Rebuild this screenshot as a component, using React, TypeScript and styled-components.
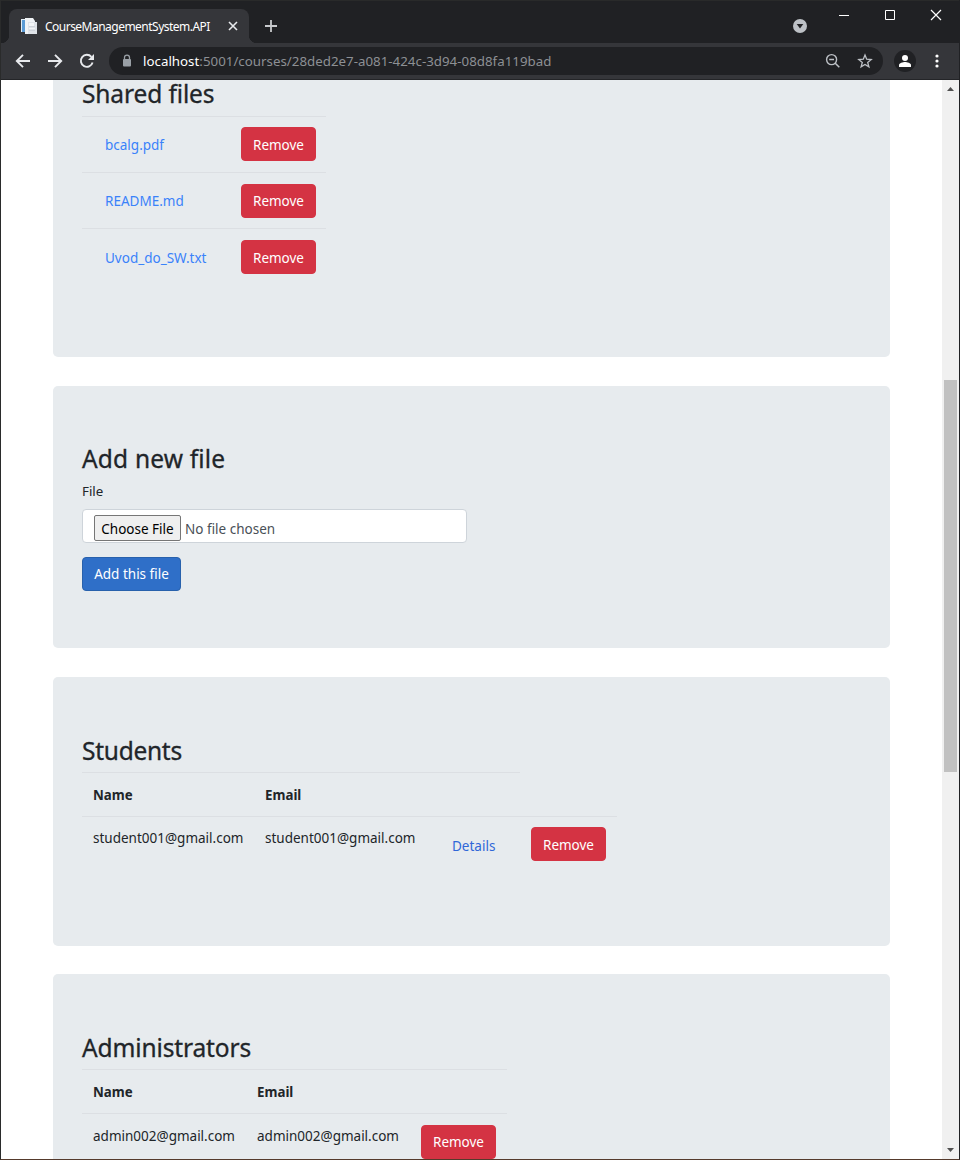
import React from "react";
import styled, { createGlobalStyle } from "styled-components";

const Global = createGlobalStyle`
  * { box-sizing: border-box; }
  html, body { margin: 0; padding: 0; overflow: hidden; }
  body {
    font-family: "Noto Sans", "Open Sans", sans-serif;
    font-size: 13.5px;
    color: #212529;
    background: #202124;
  }
`;

const Window = styled.div`
  display: flex;
  flex-direction: column;
  width: 960px;
  height: 1160px;
  background: #202124;
  border-left: 1px solid #2a2b2b;
  border-right: 1px solid #202124;
  border-bottom: 1px solid #553a2c;
  overflow: hidden;
`;

const TabStrip = styled.header`
  display: flex;
  height: 43px;
  flex: none;
  padding-left: 8px;
  border-top: 1px solid #292a2a;
`;

const Tab = styled.div`
  display: flex;
  align-items: center;
  position: relative;
  width: 240px;
  height: 34px;
  margin-top: 8px;
  padding: 0 10px 0 12px;
  border-radius: 8px 8px 0 0;
  background: #35363a;
  color: #fff;

  &::before, &::after {
    content: "";
    position: absolute;
    bottom: 0;
    width: 8px;
    height: 8px;
  }
  &::before { left: -8px; background: radial-gradient(circle at 0 0, transparent 8px, #35363a 8.5px); }
  &::after { right: -8px; background: radial-gradient(circle at 100% 0, transparent 8px, #35363a 8.5px); }
`;

const TabTitle = styled.span`
  flex: 1;
  margin-left: 8px;
  font-size: 12px;
  letter-spacing: -0.52px;
  white-space: nowrap;
`;

const NewTab = styled.div`
  display: flex;
  margin: 18px 0 0 15px;
`;

const WindowControls = styled.div`
  display: flex;
  align-items: flex-start;
  margin-left: auto;
  padding: 8px 17px 0 0;
  gap: 34px;
  svg { display: block; }
`;

const TabSearch = styled.div`
  margin: 10px -3px 0 0;
`;

const Toolbar = styled.div`
  display: flex;
  align-items: center;
  height: 37px;
  flex: none;
  padding: 0 14px 1px 14px;
  background: #35363a;
  border-bottom: 1px solid #242528;
  svg { display: block; flex: none; }
`;

const NavButtons = styled.div`
  display: flex;
  gap: 16px;
  width: 94px;
`;

const AddressBar = styled.div`
  display: flex;
  align-items: center;
  width: 774px;
  height: 28px;
  padding: 0 10px 0 12px;
  border-radius: 14px;
  background: #202124;
`;

const Url = styled.span`
  flex: 1;
  margin-left: 10px;
  font-size: 13.3px;
  letter-spacing: 0.015px;
  white-space: nowrap;
  color: #8d9094;
  b { font-weight: 400; color: #fff; }
`;

const Actions = styled.div`
  display: flex;
  align-items: center;
  gap: 16px;
`;

const Avatar = styled.div`
  display: flex;
  align-items: center;
  justify-content: center;
  width: 22px;
  height: 22px;
  margin-left: 11px;
  border-radius: 50%;
  background: #202124;
`;

const MenuDots = styled.div`
  margin-left: auto;
  margin-right: 6px;
`;

const Viewport = styled.div`
  display: flex;
  flex: 1;
  min-height: 0;
  background: #fff;
`;

const Page = styled.main`
  display: flex;
  flex-direction: column;
  flex: 1;
  padding: 0 52px;
`;

const Card = styled.section<{ $height: number; $gap?: number; $top?: number; $continued?: boolean }>`
  flex: none;
  height: ${(p) => p.$height}px;
  margin-top: ${(p) => p.$gap ?? 0}px;
  padding: ${(p) => p.$top ?? 59}px 29px 0;
  border-radius: ${(p) => (p.$continued ? "0 0 5px 5px" : "5px")};
  background: #e7ebee;
`;

const Heading = styled.h3<{ $spacing?: number; $after?: number }>`
  height: 28px;
  margin: 0 0 ${(p) => p.$after ?? 8}px;
  font-size: 24.5px;
  font-weight: 400;
  line-height: 28px;
  letter-spacing: ${(p) => p.$spacing ?? 0}px;
  -webkit-text-stroke: 0.3px currentColor;
  white-space: nowrap;
`;

const Row = styled.div<{ $cols: string; $width: number; $height: number }>`
  display: grid;
  grid-template-columns: ${(p) => p.$cols};
  width: ${(p) => p.$width}px;
  height: ${(p) => p.$height}px;
  padding: 10px 10px 0 11px;
  border-top: 1px solid #dcdfe3;
  line-height: 22px;
  white-space: nowrap;
`;

const HeadCell = styled.span`
  padding-top: 1px;
  font-weight: 700;
  font-size: 13.3px;
`;

const Cell = styled.span<{ $drop?: number }>`
  padding-top: ${(p) => p.$drop ?? 0}px;
`;

const Link = styled.a<{ $bright?: boolean; $drop?: number }>`
  padding: ${(p) => p.$drop ?? 8}px 0 0 12px;
  color: ${(p) => (p.$bright ? "#3a82fa" : "#2f67d8")};
`;

const Button = styled.button<{ $primary?: boolean; $drop?: number; $line?: number }>`
  display: block;
  width: ${(p) => (p.$primary ? 99 : 75)}px;
  height: 34px;
  margin: ${(p) => p.$drop ?? 0}px 0 0;
  padding: 1px 0 0;
  border: 1px solid ${(p) => (p.$primary ? "#2861ac" : "#d43343")};
  border-radius: 4px;
  background: ${(p) => (p.$primary ? "#2f6fc8" : "#d43343")};
  color: #fff;
  font: inherit;
  font-size: 13.5px;
  line-height: ${(p) => p.$line ?? 31}px;
  white-space: nowrap;
`;

const FieldLabel = styled.div`
  height: 22px;
  margin-bottom: 7px;
  line-height: 22px;
  margin-top: -1px;
  font-size: 13.3px;
`;

const FileField = styled.div`
  display: flex;
  width: 385px;
  height: 34px;
  margin-bottom: 14px;
  padding: 5px 11px 0;
  border: 1px solid #ced4da;
  border-radius: 4px;
  background: #fff;
  color: #495057;
  line-height: 29px;
`;

const ChooseFile = styled.span`
  width: 87px;
  height: 26px;
  margin-right: 4px;
  border: 1px solid #767676;
  border-radius: 2px;
  background: #efefef;
  color: #000;
  line-height: 26px;
  text-align: center;
  white-space: nowrap;
`;

const Scrollbar = styled.div`
  display: flex;
  flex-direction: column;
  align-items: center;
  width: 17px;
  background: #f0f0f0;
  svg { display: block; }
`;

const Thumb = styled.div`
  width: 13px;
  height: 392px;
  margin: 287px 0 auto;
  background: #c1c1c1;
`;

const FILES = [
  { name: "bcalg.pdf", linkDrop: 7, drop: 0, line: 33 },
  { name: "README.md", linkDrop: 7, drop: 1, line: 31 },
  { name: "Uvod_do_SW.txt", linkDrop: 8, drop: 1, line: 33 },
];

export default function App() {
  return (
    <>
      <Global />
      <Window>
        <TabStrip>
          <Tab>
            <svg width="16" height="16" viewBox="0 0 16 16">
              <path d="M0 1h6v13H0z" fill="#e3edf5" />
              <path d="M1 2h3v12H1z" fill="#5b9bd5" />
              <path d="M4 0h8l2 3v13H4z" fill="#f0f3f6" />
              <path d="M7 4h9v12H7z" fill="#dfe3e8" />
              <path d="M8 5h5v3H8zM8 10h6v1H8z" fill="#f3f5f7" />
              <path d="M8 8.5h6M8 12.5h6" stroke="#ced3da" />
            </svg>
            <TabTitle>CourseManagementSystem.API</TabTitle>
            <svg width="12" height="12" viewBox="0 0 12 12">
              <path d="M2 2l8 8M10 2l-8 8" stroke="#e8eaed" strokeWidth="1.6" />
            </svg>
          </Tab>
          <NewTab>
            <svg width="14" height="14" viewBox="0 0 14 14">
              <path d="M7 1v12M1 7h12" stroke="#c8cacd" strokeWidth="1.8" />
            </svg>
          </NewTab>
          <WindowControls>
            <TabSearch>
              <svg width="14" height="14" viewBox="0 0 14 14">
                <circle cx="7" cy="7" r="7" fill="#bdc1c6" />
                <path d="M3.7 5h6.6L7 9.5z" fill="#202124" />
              </svg>
            </TabSearch>
            <svg width="12" height="12" viewBox="0 0 12 12">
              <path d="M1 6.5h10" stroke="#fff" />
            </svg>
            <svg width="12" height="12" viewBox="0 0 12 12">
              <path d="M1.5 1.5h9v9h-9z" fill="none" stroke="#fff" />
            </svg>
            <svg width="12" height="12" viewBox="0 0 12 12">
              <path d="M1 1l10 10M11 1L1 11" stroke="#fff" strokeWidth="1.2" />
            </svg>
          </WindowControls>
        </TabStrip>
        <Toolbar>
          <NavButtons>
            <svg width="16" height="16" viewBox="0 0 16 16">
              <path d="M15 8H2.2M8 1.8L1.8 8 8 14.2" fill="none" stroke="#e8eaed" strokeWidth="1.9" />
            </svg>
            <svg width="16" height="16" viewBox="0 0 16 16">
              <path d="M1 8h12.8M8 1.8L14.2 8 8 14.2" fill="none" stroke="#e8eaed" strokeWidth="1.9" />
            </svg>
            <svg width="16" height="16" viewBox="0 0 16 16">
              <path d="M13.6 9.5A6 6 0 1 1 12.4 3.9" fill="none" stroke="#e8eaed" strokeWidth="1.9" />
              <path d="M15 1v6H9z" fill="#e8eaed" />
            </svg>
          </NavButtons>
          <AddressBar>
            <svg width="12" height="14" viewBox="0 0 12 14">
              <path d="M3.5 6V3.6a2.5 2.5 0 0 1 5 0V6" fill="none" stroke="#9aa0a6" strokeWidth="1.3" />
              <rect x="2" y="5" width="8" height="7.5" rx="1" fill="#9aa0a6" />
            </svg>
            <Url><b>localhost</b>:5001/courses/28ded2e7-a081-424c-3d94-08d8fa119bad</Url>
            <Actions>
              <svg width="16" height="16" viewBox="0 0 16 16">
                <circle cx="6.6" cy="6.6" r="5" fill="none" stroke="#bdc1c6" strokeWidth="1.4" />
                <path d="M4.2 6.6h4.8M10 10l4.3 4.3" stroke="#bdc1c6" strokeWidth="1.5" />
              </svg>
              <svg width="16" height="16" viewBox="0 0 16 16">
                <path d="M8 2l1.7 4.2 4.5.3-3.5 2.9 1.2 4.5L8 11.4l-3.9 2.5 1.2-4.5L1.8 6.5l4.5-.3z" fill="none" stroke="#bdc1c6" strokeWidth="1.3" />
              </svg>
            </Actions>
          </AddressBar>
          <Avatar>
            <svg width="14" height="14" viewBox="0 0 14 14">
              <circle cx="7" cy="4" r="3" fill="#fff" />
              <path d="M1 13v-2C1 9 5 8 7 8s6 1 6 3v2z" fill="#fff" />
            </svg>
          </Avatar>
          <MenuDots>
            <svg width="4" height="14" viewBox="0 0 4 14">
              <circle cx="2" cy="2" r="1.6" fill="#fff" />
              <circle cx="2" cy="7" r="1.6" fill="#fff" />
              <circle cx="2" cy="12" r="1.6" fill="#fff" />
            </svg>
          </MenuDots>
        </Toolbar>
        <Viewport>
          <Page>
            <Card $height={277} $top={0} $continued>
              <Heading $spacing={-0.12}>Shared files</Heading>
              {FILES.map((file) => (
                <Row key={file.name} $cols="148px 75px" $width={244} $height={56}>
                  <Link $bright $drop={file.linkDrop}>{file.name}</Link>
                  <Button $drop={file.drop} $line={file.line}>Remove</Button>
                </Row>
              ))}
            </Card>
            <Card $height={262} $gap={29}>
              <Heading $spacing={0.18}>Add new file</Heading>
              <FieldLabel>File</FieldLabel>
              <FileField>
                <ChooseFile>Choose File</ChooseFile>
                No file chosen
              </FileField>
              <Button $primary>Add this file</Button>
            </Card>
            <Card $height={269} $gap={29} $top={60}>
              <Heading $spacing={-0.27} $after={7}>Students</Heading>
              <Row $cols="172px 172px" $width={438} $height={44}>
                <HeadCell>Name</HeadCell>
                <HeadCell>Email</HeadCell>
              </Row>
              <Row $cols="172px 175px 91px 75px" $width={535} $height={56}>
                <Cell>student001@gmail.com</Cell>
                <Cell>student001@gmail.com</Cell>
                <Link>Details</Link>
                <Button $line={33}>Remove</Button>
              </Row>
            </Card>
            <Card $height={269} $gap={28} $top={60}>
              <Heading $spacing={-0.13} $after={7}>Administrators</Heading>
              <Row $cols="164px 164px" $width={425} $height={44}>
                <HeadCell>Name</HeadCell>
                <HeadCell>Email</HeadCell>
              </Row>
              <Row $cols="164px 164px 75px" $width={425} $height={56}>
                <Cell $drop={1}>admin002@gmail.com</Cell>
                <Cell $drop={1}>admin002@gmail.com</Cell>
                <Button $drop={1}>Remove</Button>
              </Row>
            </Card>
          </Page>
          <Scrollbar>
            <svg width="17" height="13" viewBox="0 0 17 13">
              <path d="M5 11l3.5-4 3.5 4z" fill="#505050" />
            </svg>
            <Thumb />
            <svg width="17" height="15" viewBox="0 0 17 15">
              <path d="M5 4h7l-3.5 4z" fill="#505050" />
            </svg>
          </Scrollbar>
        </Viewport>
      </Window>
    </>
  );
}
